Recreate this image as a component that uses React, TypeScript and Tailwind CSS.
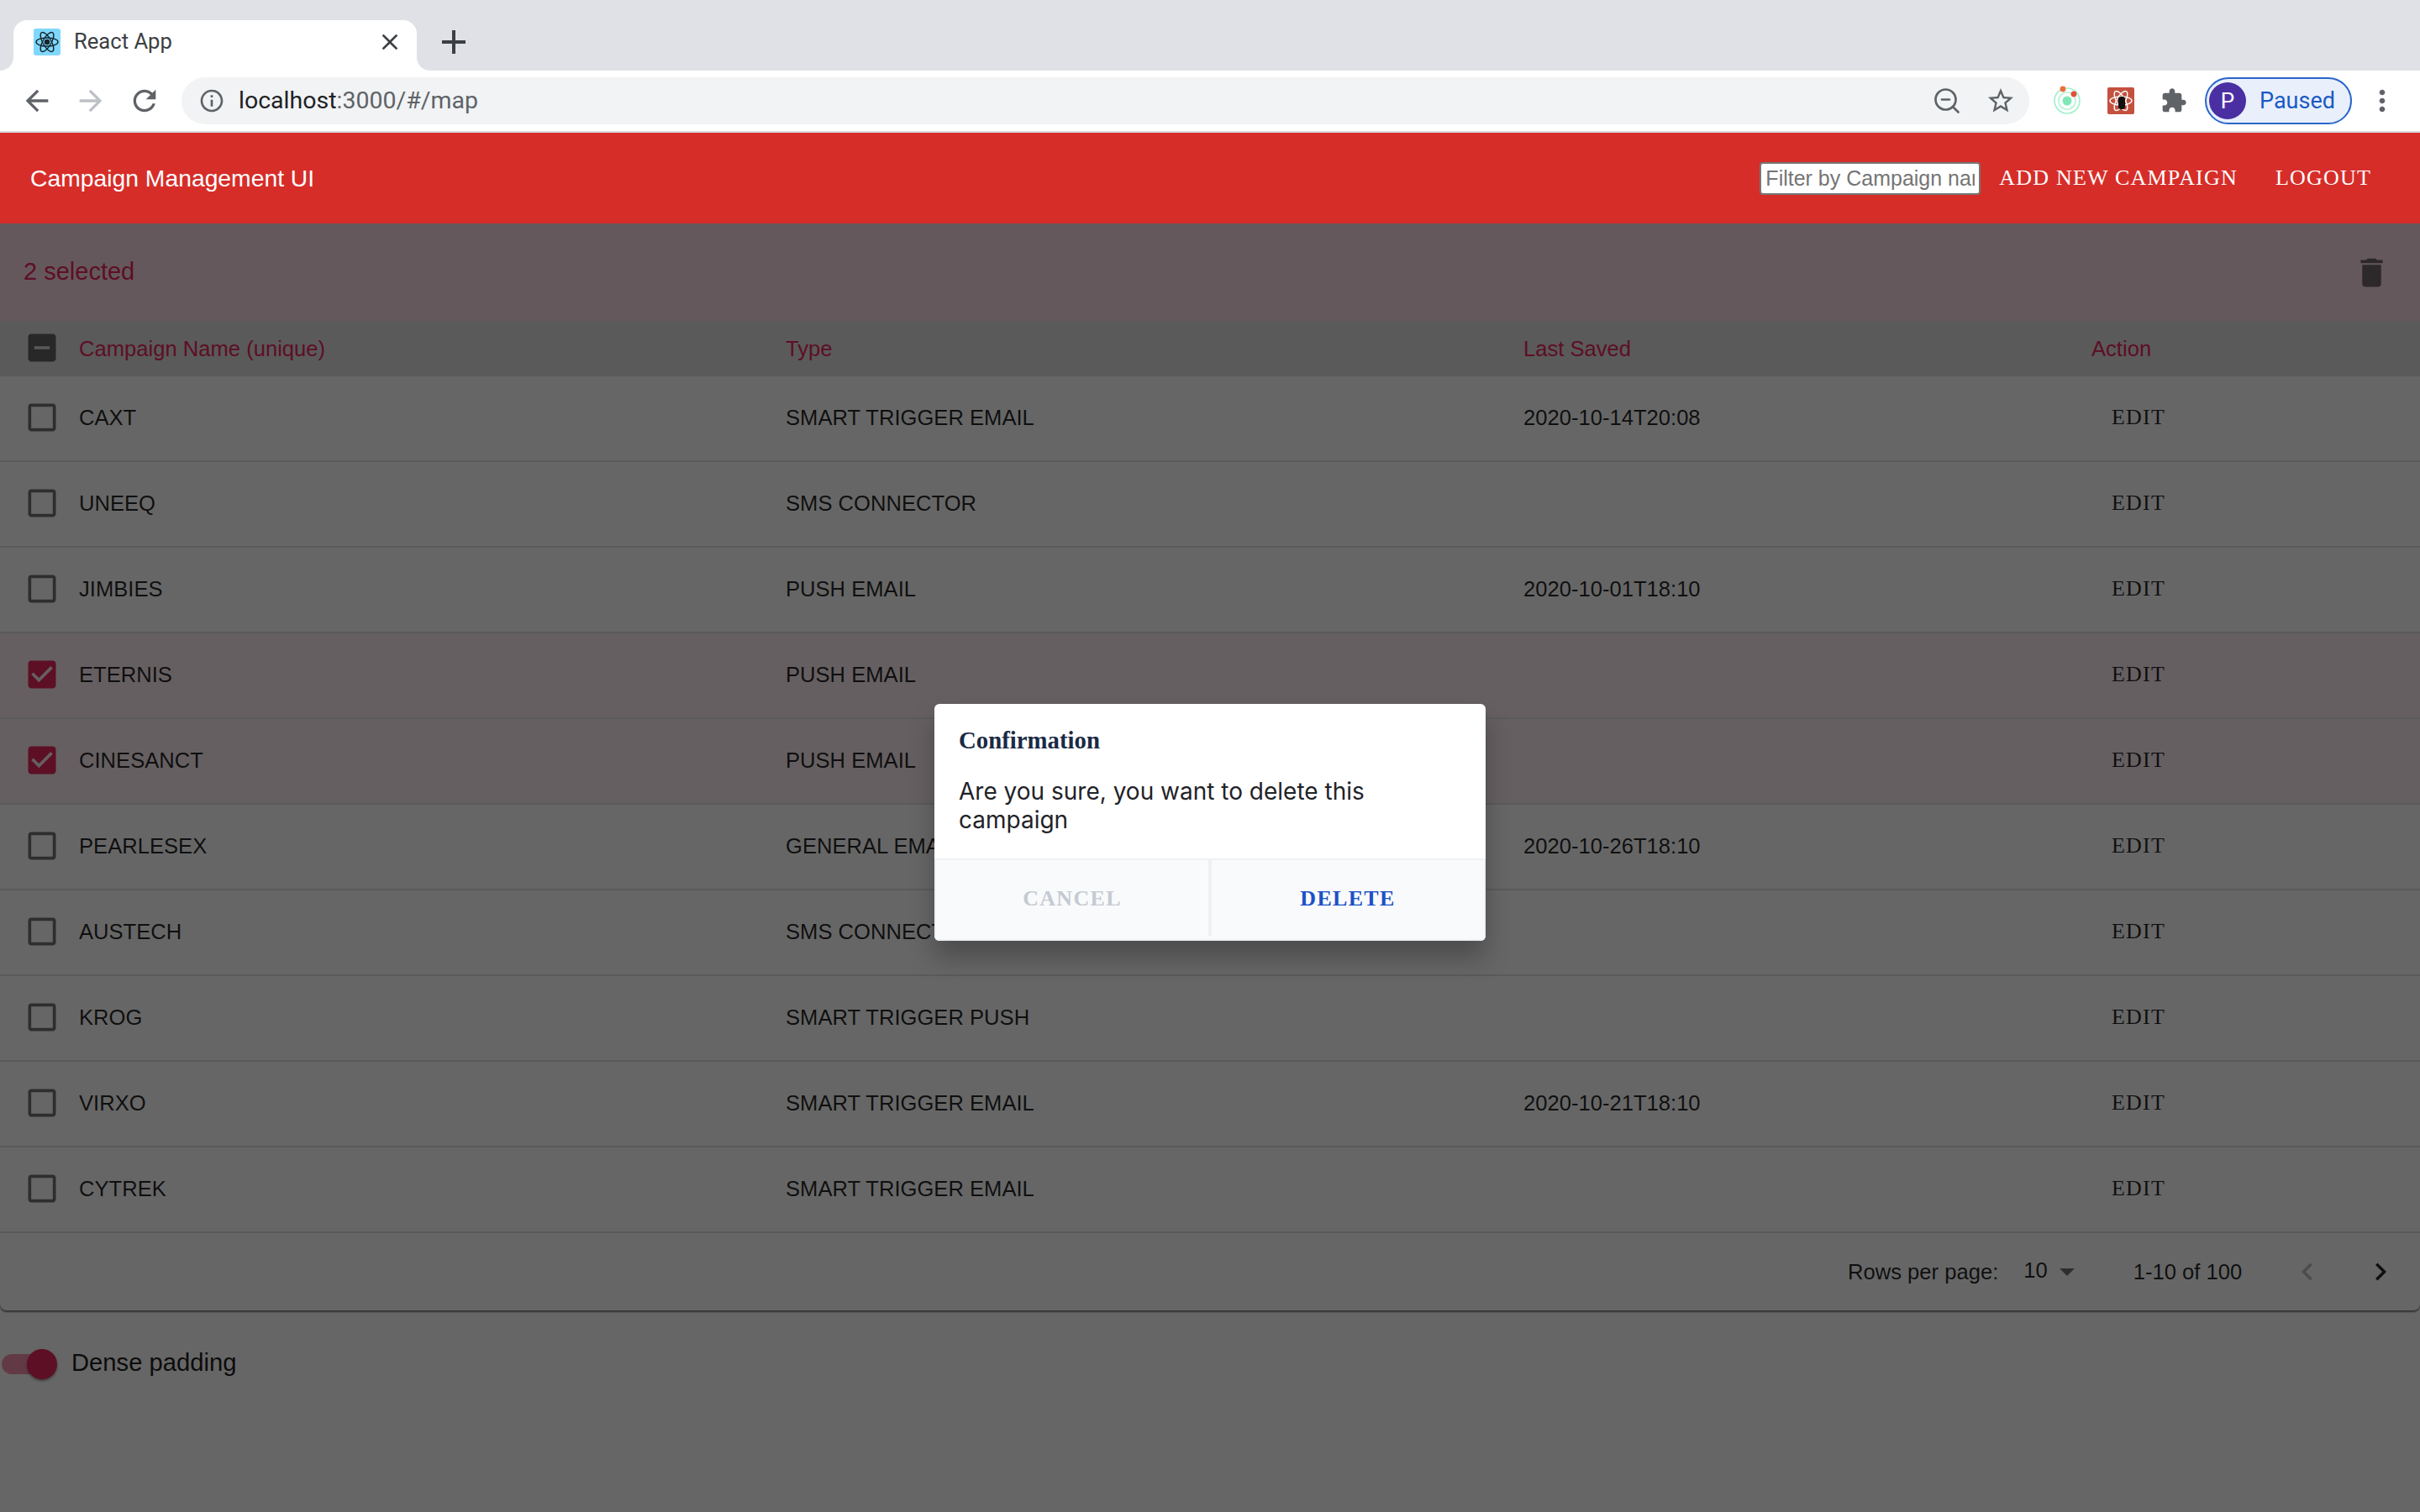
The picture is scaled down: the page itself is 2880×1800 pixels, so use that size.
import React from 'react';
import { ZoomOut } from 'lucide-react';

const rows = [
  { name: 'CAXT', type: 'SMART TRIGGER EMAIL', saved: '2020-10-14T20:08', checked: false },
  { name: 'UNEEQ', type: 'SMS CONNECTOR', saved: '', checked: false },
  { name: 'JIMBIES', type: 'PUSH EMAIL', saved: '2020-10-01T18:10', checked: false },
  { name: 'ETERNIS', type: 'PUSH EMAIL', saved: '', checked: true },
  { name: 'CINESANCT', type: 'PUSH EMAIL', saved: '', checked: true },
  { name: 'PEARLESEX', type: 'GENERAL EMAIL', saved: '2020-10-26T18:10', checked: false },
  { name: 'AUSTECH', type: 'SMS CONNECTOR', saved: '', checked: false },
  { name: 'KROG', type: 'SMART TRIGGER PUSH', saved: '', checked: false },
  { name: 'VIRXO', type: 'SMART TRIGGER EMAIL', saved: '2020-10-21T18:10', checked: false },
  { name: 'CYTREK', type: 'SMART TRIGGER EMAIL', saved: '', checked: false },
];

const Icon = ({ d, className }: { d: string; className?: string }) => (
  <svg viewBox="0 0 24 24" fill="currentColor" className={className}>
    <path d={d} />
  </svg>
);

const paths = {
  back: 'M20 11H7.83l5.59-5.59L12 4l-8 8 8 8 1.41-1.41L7.83 13H20v-2z',
  forward: 'M4 11h12.17l-5.59-5.59L12 4l8 8-8 8-1.41-1.41L16.17 13H4v-2z',
  reload:
    'M17.65 6.35C16.2 4.9 14.21 4 12 4c-4.42 0-7.99 3.58-7.99 8s3.57 8 7.99 8c3.73 0 6.84-2.55 7.73-6h-2.08c-.82 2.33-3.04 4-5.65 4-3.31 0-6-2.69-6-6s2.69-6 6-6c1.66 0 3.14.69 4.22 1.78L13 11h7V4l-2.35 2.35z',
  info: 'M11 7h2v2h-2zm0 4h2v6h-2zm1-9C6.48 2 2 6.48 2 12s4.48 10 10 10 10-4.48 10-10S17.52 2 12 2zm0 18c-4.41 0-8-3.59-8-8s3.59-8 8-8 8 3.59 8 8-3.59 8-8 8z',
  star: 'M22 9.24l-7.19-.62L12 2 9.19 8.63 2 9.24l5.46 4.73L5.82 21 12 17.27 18.18 21l-1.63-7.03L22 9.24zM12 15.4l-3.76 2.27 1-4.28-3.32-2.88 4.38-.38L12 6.1l1.71 4.04 4.38.38-3.32 2.88 1 4.28L12 15.4z',
  close:
    'M19 6.41L17.59 5 12 10.59 6.41 5 5 6.41 10.59 12 5 17.59 6.41 19 12 13.41 17.59 19 19 17.59 13.41 12z',
  plus: 'M19 13h-6v6h-2v-6H5v-2h6V5h2v6h6v2z',
  puzzle:
    'M20.5 11H19V7c0-1.1-.9-2-2-2h-4V3.5C13 2.12 11.88 1 10.5 1S8 2.12 8 3.5V5H4c-1.1 0-1.99.9-1.99 2v3.8H3.5c1.49 0 2.7 1.21 2.7 2.7s-1.21 2.7-2.7 2.7H2V20c0 1.1.9 2 2 2h3.8v-1.5c0-1.49 1.21-2.7 2.7-2.7 1.49 0 2.7 1.21 2.7 2.7V22H17c1.1 0 2-.9 2-2v-4h1.5c1.38 0 2.5-1.12 2.5-2.5S21.88 11 20.5 11z',
  kebab:
    'M12 8c1.1 0 2-.9 2-2s-.9-2-2-2-2 .9-2 2 .9 2 2 2zm0 2c-1.1 0-2 .9-2 2s.9 2 2 2 2-.9 2-2-.9-2-2-2zm0 6c-1.1 0-2 .9-2 2s.9 2 2 2 2-.9 2-2-.9-2-2-2z',
  trash: 'M6 19c0 1.1.9 2 2 2h8c1.1 0 2-.9 2-2V7H6v12zM19 4h-3.5l-1-1h-5l-1 1H5v2h14V4z',
  unchecked:
    'M19 5v14H5V5h14m0-2H5c-1.1 0-2 .9-2 2v14c0 1.1.9 2 2 2h14c1.1 0 2-.9 2-2V5c0-1.1-.9-2-2-2z',
  checked:
    'M19 3H5c-1.11 0-2 .9-2 2v14c0 1.1.89 2 2 2h14c1.11 0 2-.9 2-2V5c0-1.1-.89-2-2-2zm-9 14l-5-5 1.41-1.41L10 14.17l7.59-7.59L19 8l-9 9z',
  indeterminate:
    'M19 3H5c-1.1 0-2 .9-2 2v14c0 1.1.9 2 2 2h14c1.1 0 2-.9 2-2V5c0-1.1-.9-2-2-2zm-2 10H7v-2h10v2z',
  prev: 'M15.41 7.41L14 6l-6 6 6 6 1.41-1.41L10.83 12z',
  next: 'M10 6L8.59 7.41 13.17 12l-4.58 4.59L10 18l6-6z',
};

const Atom = ({ stroke, className }: { stroke: string; className?: string }) => (
  <svg viewBox="0 0 32 32" fill="none" stroke={stroke} strokeWidth="1.4" className={className}>
    <ellipse cx="16" cy="16" rx="13" ry="5" />
    <ellipse cx="16" cy="16" rx="13" ry="5" transform="rotate(60 16 16)" />
    <ellipse cx="16" cy="16" rx="13" ry="5" transform="rotate(120 16 16)" />
    <circle cx="16" cy="16" r="2.6" fill={stroke} />
  </svg>
);

const BrowserChrome = () => (
  <div className="font-['Roboto',sans-serif]">
    <div className="h-[84px] bg-[#dfe1e6] pl-4 pt-6 flex items-start">
      <div className="relative w-[480px] h-[60px] bg-white rounded-t-2xl flex items-center pl-6 pr-4 pb-[8px]">
        <svg viewBox="0 0 16 16" className="absolute left-[-16px] bottom-0 w-4 h-4 text-white" fill="currentColor">
          <path d="M16 0v16H0C9 16 16 9 16 0z" />
        </svg>
        <svg viewBox="0 0 16 16" className="absolute right-[-16px] bottom-0 w-4 h-4 text-white" fill="currentColor">
          <path d="M0 0v16h16C7 16 0 9 0 0z" />
        </svg>
        <div className="w-8 h-8 rounded-[3px] bg-[#7fd8fb] flex items-center justify-center">
          <Atom stroke="#16242c" className="w-8 h-8" />
        </div>
        <span className="ml-4 text-[25.6px] text-[#3c4043] leading-none">React App</span>
        <Icon d={paths.close} className="ml-auto w-8 h-8 text-[#3c4043]" />
      </div>
      <Icon d={paths.plus} className="ml-[20px] mt-[2px] w-12 h-12 text-[#3c4043]" />
    </div>
    <div className="h-[74px] bg-white border-b-2 border-[#dadce0] flex items-start pt-2">
      <div className="flex items-center h-14 pl-6 gap-6">
        <Icon d={paths.back} className="w-10 h-10 text-[#5f6368]" />
        <Icon d={paths.forward} className="w-10 h-10 text-[#bdc1c6]" />
        <Icon d={paths.reload} className="w-10 h-10 text-[#5f6368]" />
      </div>
      <div className="ml-[24px] w-[2199px] h-14 rounded-full bg-[#f1f3f4] flex items-center pl-[20px] pr-[16px]">
        <Icon d={paths.info} className="w-8 h-8 text-[#5f6368]" />
        <span className="ml-[16px] text-[28.5px] leading-none text-[#5f6368]">
          <span className="text-[#202124]">localhost</span>:3000/#/map
        </span>
        <ZoomOut className="ml-auto w-9 h-9 text-[#5f6368]" strokeWidth={1.8} />
        <Icon d={paths.star} className="ml-[28px] w-9 h-9 text-[#5f6368]" />
      </div>
      <div className="flex items-center h-14 ml-[27px]">
        <svg viewBox="0 0 36 36" fill="none" className="w-9 h-9">
          <circle cx="18" cy="18" r="15" stroke="#9ff0cc" strokeWidth="1.6" />
          <circle cx="18" cy="18" r="10" stroke="#b6f2d8" strokeWidth="1.6" />
          <circle cx="18" cy="18" r="5.5" fill="#7fe8b6" />
          <circle cx="13" cy="4" r="3.4" fill="#e8703a" />
          <circle cx="26" cy="10" r="3.4" fill="#e0503a" />
        </svg>
        <div className="ml-[30px] w-8 h-8 rounded-[2px] bg-[#c4513f] flex items-center justify-center relative">
          <Atom stroke="#ffffff" className="w-8 h-8" />
          <span className="absolute left-[13px] top-[11px] w-[8px] h-[15px] rounded-[3px] bg-[#111111]" />
        </div>
        <Icon d={paths.puzzle} className="ml-[31px] w-8 h-8 text-[#5f6368]" />
        <div className="ml-[21px] w-[175px] h-[56px] rounded-full border-2 border-[#2a66cc] bg-[#e9f0fb] flex items-center pl-[3px]">
          <span className="w-[44px] h-[44px] rounded-full bg-[#4a2fa3] text-white text-[26px] flex items-center justify-center">P</span>
          <span className="ml-4 text-[27px] leading-none text-[#1a5bc4]">Paused</span>
        </div>
        <Icon d={paths.kebab} className="ml-[16px] w-10 h-10 text-[#5f6368]" />
      </div>
    </div>
  </div>
);

const Header = () => (
  <div className="relative z-20 h-[108px] bg-[#d72d29] flex items-center pl-9 pr-[58px] text-white">
    <span className="font-['Liberation_Sans',sans-serif] text-[28.3px] leading-none">Campaign Management UI</span>
    <input
      placeholder="Filter by Campaign name"
      className="ml-auto w-[263px] shrink-0 h-[39px] bg-white border-2 border-[#767676] rounded-[4px] px-[5px] text-[25px] font-['Liberation_Sans',sans-serif] placeholder:text-[#757575] outline-none"
    />
    <span className="ml-[22px] font-['Liberation_Serif',serif] text-[26px] leading-none tracking-[1.2px]">ADD NEW CAMPAIGN</span>
    <span className="ml-[45px] font-['Liberation_Serif',serif] text-[26px] leading-none tracking-[1.2px]">LOGOUT</span>
  </div>
);

const rowGrid = 'grid grid-cols-[94px_841px_878px_676px_1fr] items-center';

const DataTable = () => (
  <div className="bg-white rounded-b-lg shadow-[0_2px_2px_rgba(0,0,0,0.5)] font-['Liberation_Sans',sans-serif]">
    <div className="h-[116px] bg-[#fcdde8] flex items-center justify-between pl-7 pr-[35px]">
      <span className="text-[29px] text-[#e9265e]">2 selected</span>
      <Icon d={paths.trash} className="w-[45px] h-[45px] text-black/55" />
    </div>
    <div className={`${rowGrid} h-[66px] bg-[#e0e0e0] text-[25.6px] text-[#e9265e]`}>
      <Icon d={paths.indeterminate} className="ml-[28px] -mt-0.5 w-11 h-11 text-black/55" />
      <span>Campaign Name (unique)</span>
      <span>Type</span>
      <span>Last Saved</span>
      <span>Action</span>
    </div>
    {rows.map((row) => (
      <div
        key={row.name}
        className={`${rowGrid} h-[102px] pb-[2px] border-b-2 border-[#e0e0e0] text-[25.6px] text-black/85 ${row.checked ? 'bg-[#fdeef3]' : ''}`}
      >
        <Icon
          d={row.checked ? paths.checked : paths.unchecked}
          className={`ml-[28px] w-11 h-11 ${row.checked ? 'text-[#e9265e]' : 'text-black/55'}`}
        />
        <span>{row.name}</span>
        <span>{row.type}</span>
        <span>{row.saved}</span>
        <span className="pl-6 font-['Liberation_Serif',serif] text-[26px] tracking-[1.2px] -mt-0.5">EDIT</span>
      </div>
    ))}
    <div className="h-[92px] flex items-center text-[25.6px] text-black/85 pl-[2199px]">
      <span>Rows per page:</span>
      <span className="ml-[30px] -mt-1">10</span>
      <svg viewBox="0 0 18 9" className="ml-[14px] w-[18px] h-[9px] text-black/55" fill="currentColor">
        <path d="M0 0h18L9 9z" />
      </svg>
      <span className="ml-[70px]">1-10 of 100</span>
      <Icon d={paths.prev} className="ml-[57px] w-[42px] h-[42px] text-black/25" />
      <Icon d={paths.next} className="ml-[45px] w-[42px] h-[42px] text-black/85" />
    </div>
  </div>
);

const DensePadding = () => (
  <div className="flex items-center h-9 mt-[46px] font-['Liberation_Sans',sans-serif]">
    <div className="relative w-[66px] h-9 ml-0.5">
      <div className="absolute left-0 top-[6px] w-[60px] h-6 rounded-full bg-[#e9265e]/50" />
      <div className="absolute right-0 top-0 w-9 h-9 rounded-full bg-[#e9265e] shadow-[0_2px_3px_rgba(0,0,0,0.4)]" />
    </div>
    <span className="ml-[17px] -mt-0.5 text-[29.2px] text-black/90">Dense padding</span>
  </div>
);

const ConfirmDialog = () => (
  <div className="absolute inset-0 z-10 bg-black/60 flex items-center justify-center">
    <div className="w-[656px] h-[282px] bg-white rounded-md overflow-hidden shadow-[0_20px_30px_rgba(0,0,0,0.25)] flex flex-col">
      <div className="flex-1 px-[29px] pt-[27px]">
        <div className="font-['Liberation_Serif',serif] font-bold text-[28.8px] leading-[32px] text-[#1a2a44]">Confirmation</div>
        <div className="mt-[28px] font-['Inter',sans-serif] text-[28px] leading-[34px] text-[#1f2328]">
          Are you sure, you want to delete this campaign
        </div>
      </div>
      <div className="h-[98px] flex pb-[4px] bg-[#f9fafb] border-2 border-[#eef0f3] font-['Liberation_Serif',serif] font-bold text-[26px] tracking-[1.3px]">
        <div className="w-[328px] border-r-4 border-[#eef0f3] flex items-center justify-center text-[#c5cad3]">CANCEL</div>
        <div className="flex-1 flex items-center justify-center text-[#1c50c8]">DELETE</div>
      </div>
    </div>
  </div>
);

export default function App() {
  return (
    <div className="w-full h-[1800px] flex flex-col overflow-hidden bg-white">
      <BrowserChrome />
      <div className="relative flex-1">
        <Header />
        <DataTable />
        <DensePadding />
        <ConfirmDialog />
      </div>
    </div>
  );
}
